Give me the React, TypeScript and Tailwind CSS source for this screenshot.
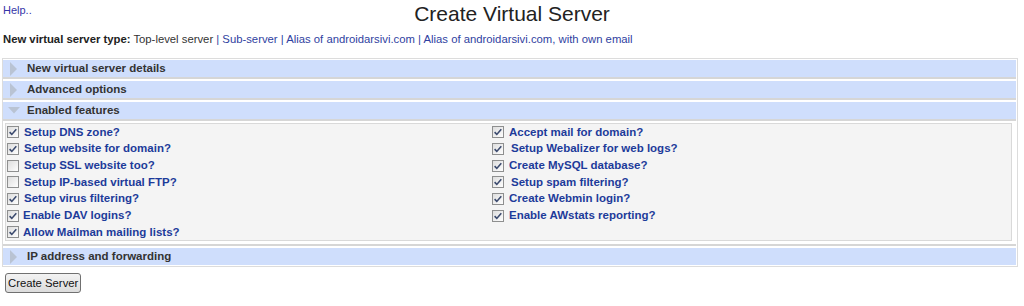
const font = { fontFamily: '"Liberation Sans", Arial, sans-serif' };

function Box({ checked }: { checked: boolean }) {
  return (
    <svg width="12" height="12" viewBox="0 0 12 12" className="shrink-0">
      <defs>
        <linearGradient id="cbg" x1="0" y1="0" x2="1" y2="1">
          <stop offset="0" stopColor="#dcdcdc" />
          <stop offset="1" stopColor="#ffffff" />
        </linearGradient>
      </defs>
      <rect x="0.5" y="0.5" width="11" height="11" fill="url(#cbg)" stroke="#8e8f8f" />
      {checked && (
        <path d="M2.6 6.1 L4.8 8.4 L9.3 3.2" fill="none" stroke="#3b4a6e" strokeWidth="1.6" />
      )}
    </svg>
  );
}

function Arrow({ open }: { open: boolean }) {
  return open ? (
    <svg width="12" height="7" viewBox="0 0 12 7" className="ml-[5px] mr-[7px]">
      <path d="M0 0 L12 0 L6 6.5 Z" fill="#b9c3d3" />
    </svg>
  ) : (
    <svg width="7" height="14" viewBox="0 0 7 14" className="ml-[7px] mr-[10px]">
      <path d="M0 0 L7 7 L0 14 Z" fill="#b9c3d3" />
    </svg>
  );
}

function Bar({ title, open = false }: { title: string; open?: boolean }) {
  return (
    <div className="h-[17px] bg-[#cfdefc] flex items-center">
      <Arrow open={open} />
      <span className="text-[11.5px] font-bold text-[#333]">{title}</span>
    </div>
  );
}

function Opt({ label, checked, shift = 0 }: { label: string; checked: boolean; shift?: number }) {
  return (
    <div className="h-[16.67px] flex items-center gap-[5px]">
      <Box checked={checked} />
      <span
        className={
          "text-[11.5px] font-bold text-[#1d3b9a] " + (shift === 1 ? "ml-[2px]" : shift === -1 ? "-ml-px" : "")
        }
      >
        {label}
      </span>
    </div>
  );
}

export default function App() {
  const left: [string, boolean, number][] = [
    ["Setup DNS zone?", true, 0],
    ["Setup website for domain?", true, 0],
    ["Setup SSL website too?", false, 0],
    ["Setup IP-based virtual FTP?", false, 0],
    ["Setup virus filtering?", true, 0],
    ["Enable DAV logins?", true, -1],
    ["Allow Mailman mailing lists?", true, -1],
  ];
  const right: [string, boolean, number][] = [
    ["Accept mail for domain?", true, 0],
    ["Setup Webalizer for web logs?", true, 1],
    ["Create MySQL database?", true, 0],
    ["Setup spam filtering?", true, 1],
    ["Create Webmin login?", true, 0],
    ["Enable AWstats reporting?", true, 0],
  ];

  return (
    <div className="w-[1024px] h-[306px] bg-white text-[#222]" style={font}>
      <div className="grid grid-cols-[1fr_auto_1fr] h-[32px]">
        <a className="pl-[3px] pt-[4px] text-[11px] leading-[13px] text-[#3535a8]">Help..</a>
        <h1 className="pt-[2px] text-[21px] leading-[24px] text-[#222]">Create Virtual Server</h1>
        <div />
      </div>
      <div className="pl-[3px] text-[11.3px] leading-[14px]">
        <b className="text-[#222]">New virtual server type:</b>{" "}
        <span className="text-[#333]">Top-level server</span>
        <span className="text-[#2f3f9f]">
          {" | "}Sub-server{" | "}Alias of androidarsivi.com{" | "}Alias of androidarsivi.com, with own email
        </span>
      </div>

      <div className="mt-[12px] ml-[2px] w-[1016px] border border-[#dcdcdc] pr-px">
        <div className="pt-px border-b-2 border-[#d6d6d6]">
          <Bar title="New virtual server details" />
        </div>
        <div className="pt-[2px] border-b-2 border-[#d6d6d6]">
          <Bar title="Advanced options" />
        </div>
        <div className="pt-[2px] border-b-2 border-[#d6d6d6]">
          <Bar title="Enabled features" open />
        </div>
        <div className="pt-[2px] pb-[3px] pl-[2px] pr-[4px] border-b-2 border-[#d6d6d6]">
          <div className="border border-[#d9d9d9] bg-[#f4f4f4] h-[118px] grid grid-cols-[485px_1fr] pl-px">
            <div className="flex flex-col">
              {left.map(([l, c, s]) => (
                <Opt key={l} label={l} checked={c} shift={s} />
              ))}
            </div>
            <div className="flex flex-col">
              {right.map(([l, c, s]) => (
                <Opt key={l} label={l} checked={c} shift={s} />
              ))}
            </div>
          </div>
        </div>
        <div className="pt-[2px] pb-px">
          <Bar title="IP address and forwarding" />
        </div>
      </div>

      <button
        className="mt-[6px] ml-[5px] h-[20px] px-[2px] text-[11.3px] leading-[14px] text-[#111] border border-[#707070] rounded-[3px] bg-gradient-to-b from-[#f3f3f3] to-[#dcdcdc]"
        style={font}
      >
        Create Server
      </button>
    </div>
  );
}
